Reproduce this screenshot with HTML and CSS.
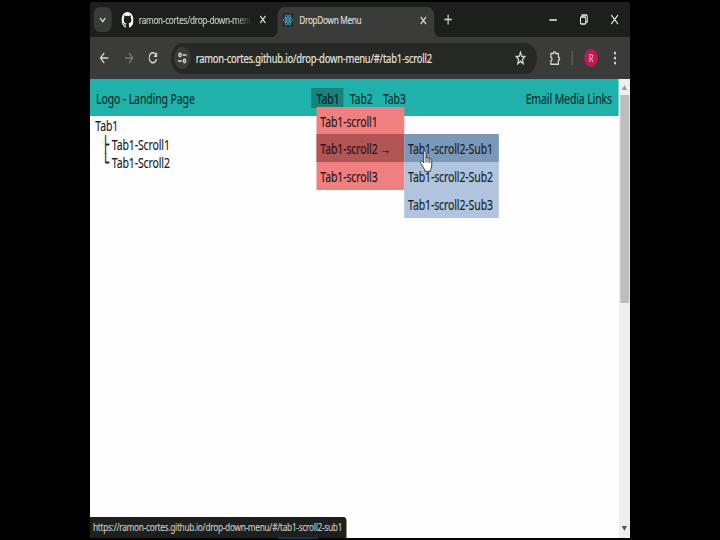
FILE: index.html
```html
<!DOCTYPE html>
<html lang="en">
<head>
<meta charset="utf-8">
<title>DropDown Menu</title>
<link rel="stylesheet" href="styles.css">
</head>
<body>
<div class="window">
  <div class="tabstrip">
    <button class="tab-search"><svg width="10" height="8" viewBox="0 0 10 8"><path d="M1.5 2 5 5.5 8.5 2"/></svg></button>
    <div class="tab">
      <svg class="github" width="16" height="16" viewBox="0 0 16 16"><path d="M8 0C3.58 0 0 3.58 0 8c0 3.54 2.29 6.53 5.47 7.59.4.07.55-.17.55-.38v-1.49c-2.01.37-2.53-.49-2.69-.94-.09-.23-.48-.94-.82-1.13-.28-.15-.68-.52-.01-.53.63-.01 1.08.58 1.23.82.72 1.21 1.87.87 2.33.66.07-.52.28-.87.51-1.07-1.78-.2-3.64-.89-3.64-3.95 0-.87.31-1.59.82-2.15-.08-.2-.36-1.02.08-2.12 0 0 .67-.21 2.2.82a7.6 7.6 0 0 1 4 0c1.53-1.04 2.2-.82 2.2-.82.44 1.1.16 1.92.08 2.12.51.56.82 1.27.82 2.15 0 3.07-1.87 3.75-3.65 3.95.29.25.54.73.54 1.48v2.2c0 .21.15.46.55.38A8 8 0 0 0 16 8c0-4.42-3.58-8-8-8Z"/></svg>
      <span class="title faded">ramon-cortes/drop-down-menu</span>
      <svg class="close" width="9" height="9" viewBox="0 0 9 9"><path d="M1 1 8 8M8 1 1 8"/></svg>
    </div>
    <div class="tab active">
      <svg class="react" width="14" height="14" viewBox="0 0 14 14"><rect width="14" height="14" rx="2"/><g><ellipse cx="7" cy="7" rx="6" ry="2.3"/><ellipse cx="7" cy="7" rx="6" ry="2.3" transform="rotate(60 7 7)"/><ellipse cx="7" cy="7" rx="6" ry="2.3" transform="rotate(120 7 7)"/><circle cx="7" cy="7" r=".8"/></g></svg>
      <span class="title">DropDown Menu</span>
      <svg class="close" width="9" height="9" viewBox="0 0 9 9"><path d="M1 1 8 8M8 1 1 8"/></svg>
    </div>
    <svg class="plus" width="11" height="11" viewBox="0 0 11 11"><path d="M5.5 .5v10M.5 5.5h10"/></svg>
    <div class="controls">
      <svg width="11" height="11" viewBox="0 0 11 11"><path d="M.5 6h10"/></svg>
      <svg width="11" height="11" viewBox="0 0 11 11"><rect x="1" y="3" width="7" height="7" rx="1"/><path d="M3 3V1h6l1 1v6H8"/></svg>
      <svg width="11" height="11" viewBox="0 0 11 11"><path d="m1 1 9 9M10 1 1 10"/></svg>
    </div>
  </div>
  <div class="toolbar">
    <div class="nav">
      <svg width="12" height="12" viewBox="0 0 12 12"><path d="M11.5 6H1M6 1 1 6l5 5"/></svg>
      <svg class="disabled" width="12" height="12" viewBox="0 0 12 12"><path d="M.5 6H11M6 1l5 5-5 5"/></svg>
      <svg width="12" height="12" viewBox="0 0 12 12"><path d="M10.7 7A5 5 0 1 1 9.7 2.6L11 4M11 .5V4.2H7.2"/></svg>
    </div>
    <div class="omnibox">
      <span class="site"><svg width="12" height="12" viewBox="0 0 12 12"><circle cx="3" cy="3" r="1.6"/><path d="M6.5 3H12M0 9h5.5"/><circle cx="9" cy="9" r="1.6"/></svg></span>
      <span class="url">ramon-cortes.github.io/drop-down-menu/#/tab1-scroll2</span>
      <svg class="star" width="14" height="14" viewBox="0 0 14 14"><path d="m7 1.2 1.6 4 4.3.3-3.3 2.8 1 4.3L7 10.3l-3.6 2.3 1-4.3L1.1 5.5l4.3-.3Z"/></svg>
    </div>
    <svg class="puzzle" width="16" height="16" viewBox="0 0 16 16"><path d="M2.5 3.5H6c0-2.4 3-2.4 3 0h3.5v3.7c2.2 0 2.2 3 0 3v4.1h-10v-3.4c2-.3 2-3.5 0-3.8Z"/></svg>
    <span class="divider"></span>
    <span class="avatar">R</span>
    <svg class="dots" width="4" height="14" viewBox="0 0 4 14"><circle cx="2" cy="2" r="1.5"/><circle cx="2" cy="7" r="1.5"/><circle cx="2" cy="12" r="1.5"/></svg>
  </div>
  <div class="viewport">
    <main class="page">
      <header class="header">
        <span class="logo">Logo - Landing Page</span>
        <nav class="tabs">
          <div class="item open">Tab1
            <ul class="menu">
              <li>Tab1-scroll1</li>
              <li class="hover">Tab1-scroll2 <span class="arrow">→</span>
                <ul class="submenu">
                  <li class="hover">Tab1-scroll2-Sub1</li>
                  <li>Tab1-scroll2-Sub2</li>
                  <li>Tab1-scroll2-Sub3</li>
                </ul>
              </li>
              <li>Tab1-scroll3</li>
            </ul>
          </div>
          <div class="item">Tab2</div>
          <div class="item">Tab3</div>
        </nav>
        <span class="links">Email Media Links</span>
      </header>
      <div class="tree">
        <div>Tab1</div>
        <div class="leaf"><span class="branch">├</span>Tab1-Scroll1</div>
        <div class="leaf"><span class="branch">└</span>Tab1-Scroll2</div>
      </div>
    </main>
    <div class="scrollbar">
      <svg width="7" height="5" viewBox="0 0 7 5"><path class="up" d="M0 5h7L3.5 0Z"/></svg>
      <span class="thumb"></span>
      <svg class="down" width="7" height="5" viewBox="0 0 7 5"><path d="M0 0h7L3.5 5Z"/></svg>
    </div>
  </div>
  <div class="status">https://ramon-cortes.github.io/drop-down-menu/#/tab1-scroll2-sub1</div>
  <svg class="cursor" width="17" height="22" viewBox="0 0 17 22"><path d="M5 13V2.5C5 .3 8 .3 8 2.5V8c.5-1.2 2.5-1 2.7.4.7-1 2.3-.7 2.5.5 1-.7 2.5-.1 2.5 1.2v5c0 3-1.8 3.8-1.8 6.2H6.5c0-2.3-3-4.8-5.3-7.8-1.2-1.8.8-3.3 2.2-2Z"/><path d="M8 8v4.5M10.7 8.5v4M13.2 9v4"/></svg>
</div>
</body>
</html>
```
FILE: styles.css
```css
* { box-sizing: border-box; }
body { margin: 0; width: 720px; height: 540px; overflow: hidden; background: #000; font-family: "Noto Sans", sans-serif; }
svg { display: block; flex: none; fill: none; stroke: #d5d6d1; stroke-width: 1.6; }

.window { position: relative; display: flex; flex-direction: column; width: 720px; height: 538px; padding-top: 2px; transform: translateX(90px) scaleX(.75); transform-origin: 0 0; white-space: nowrap; }

.tabstrip { display: flex; align-items: center; height: 35px; padding-left: 5px; background: #1d1f1c; }
.tab-search { display: grid; place-items: center; width: 24px; height: 25px; padding: 0; border: 0; border-radius: 8px; background: #393b38; }
.tab { display: flex; align-items: center; width: 221px; height: 30px; padding: 0 15px 0 13px; }
.github { fill: #fff; stroke: none; }
.title { flex: 1; margin: 0 10px 0 7px; overflow: hidden; color: #d9dad6; font-size: 11px; letter-spacing: -.42px; line-height: 20px; -webkit-text-stroke: .2px; }
.faded { color: #c4c6c1; -webkit-mask-image: linear-gradient(90deg, #000 85%, transparent); mask-image: linear-gradient(90deg, #000 85%, transparent); }
.active { position: relative; align-self: flex-end; width: 209px; padding: 0 10px 4px 7px; border-radius: 9px 9px 0 0; background: #3b3c39; }
.active .title { margin-left: 8px; }
.active::before, .active::after { content: ""; position: absolute; bottom: 0; width: 8px; height: 8px; }
.active::before { right: 100%; background: radial-gradient(circle at 0 0, transparent 8px, #3b3c39 8.5px); }
.active::after { left: 100%; background: radial-gradient(circle at 100% 0, transparent 8px, #3b3c39 8.5px); }
.react rect { fill: #20252a; stroke: none; }
.react g { stroke: #4fb4cc; stroke-width: .9; }
.plus { margin-left: 13px; }
.controls { display: flex; gap: 30px; margin-left: auto; padding-right: 15px; }
.controls svg { stroke: #f0f0ee; stroke-width: 1.3; }

.toolbar { display: flex; align-items: center; height: 42px; padding-left: 13px; background: #3b3c39; }
.nav { display: flex; gap: 20.5px; width: 95px; }
.nav .disabled { stroke: #777975; }
.omnibox { display: flex; align-items: center; width: 488px; height: 31px; padding: 0 15px 0 4px; border-radius: 16px; background: #262825; }
.site { display: grid; place-items: center; width: 22px; height: 22px; border-radius: 50%; background: #3b3c39; }
.url { flex: 1; padding-left: 7px; color: #e3e4df; font-size: 12.5px; letter-spacing: -.26px; -webkit-text-stroke: .2px; }
.puzzle { margin-left: 16px; }
.divider { width: 2px; height: 14px; margin: 0 15px 0 14px; background: #5c5d5a; }
.avatar { width: 18px; height: 18px; border-radius: 50%; background: #c2185b; color: #efcbd8; font-size: 10px; line-height: 18px; text-align: center; }
.dots { margin-left: 21px; fill: #d5d6d1; stroke: none; }

.viewport { display: flex; flex: 1; background: #fdfefd; }
.page { flex: 1; color: #191d1c; font-size: 14px; letter-spacing: -.15px; -webkit-text-stroke: .15px; }
.header { display: grid; grid-template-columns: 295px 1fr auto; align-items: center; height: 37px; padding-right: 9px; background: #20b2aa; color: #0c2d2b; }
.logo, .links { padding-top: 1px; }
.logo { padding-left: 8px; }
.tabs { display: flex; gap: 1px; }
.item { position: relative; width: 43.3px; height: 20px; padding-left: 7px; line-height: 22px; }
.open { background: #19827c; color: #08211f; }
ul { margin: 0; padding: 0; list-style: none; }
.menu { position: absolute; z-index: 1; top: 19px; left: 7px; width: 117px; background: #f08080; color: #2c1414; }
.menu li { position: relative; height: 27.8px; padding-left: 5px; line-height: 30px; }
.menu > .hover { background: #b15555; }
.arrow { font-weight: 700; }
.submenu { position: absolute; top: 0; left: 117px; width: 126px; background: #b0c4de; color: #191f26; }
.submenu .hover { background: #7c98b9; }
.tree { padding: 1px 0 0 7px; line-height: 18.7px; }
.leaf { display: flex; padding-left: 9px; }
.branch { width: 13px; font-family: "DejaVu Sans Mono", monospace; font-size: 16px; }

.scrollbar { display: flex; flex-direction: column; align-items: center; width: 15px; padding: 6px 0 7px; background: #eef0ef; }
.scrollbar svg { fill: #555754; stroke: none; }
.scrollbar .up { fill: #9a9b99; }
.thumb { width: 12px; height: 208px; margin-top: 5px; background: #bcbebc; }
.scrollbar .down { margin-top: auto; }

.status { position: absolute; bottom: 0; left: 0; width: 342px; height: 21px; padding-left: 4px; border-radius: 0 4px 0 0; background: #1e201e; color: #c7c9c6; font-size: 11px; letter-spacing: -.36px; line-height: 20px; -webkit-text-stroke: .15px; }
.status::after { content: ""; position: absolute; top: 20px; left: 251px; width: 53px; height: 2px; background: #18324e; }
.cursor { position: absolute; z-index: 3; left: 440px; top: 150px; fill: #fff; stroke: #252a30; stroke-width: 1; }
```
